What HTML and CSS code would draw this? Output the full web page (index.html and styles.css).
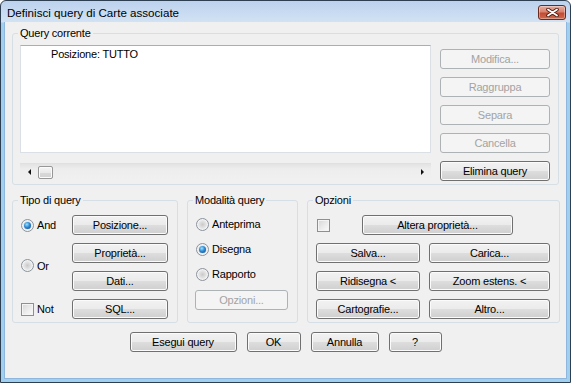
FILE: index.html
```html
<!DOCTYPE html>
<html lang="it">
<head>
    <meta charset="UTF-8">
    <title>Definisci query di Carte associate</title>
    <link rel="stylesheet" href="styles.css">
</head>
<body>

<div class="window">
    <div class="titlebar">
        <span class="title">Definisci query di Carte associate</span>
        <button class="close-btn" title="Chiudi">
            <svg width="13" height="9" viewBox="0 0 13 9">
                <path d="M2 1.5 L11 7.5 M11 1.5 L2 7.5" stroke="#4a1d14" stroke-width="3.6" stroke-linecap="round"/>
                <path d="M2 1.5 L11 7.5 M11 1.5 L2 7.5" stroke="#ffffff" stroke-width="1.8" stroke-linecap="round"/>
            </svg>
        </button>
    </div>

    <div class="client">
        <fieldset class="group group-current">
            <legend>Query corrente</legend>
            <div class="current-body">
                <div class="list-col">
                    <div class="listbox">Posizione: TUTTO</div>
                    <div class="hscroll">
                        <span class="scroll-arrow"><span class="tri tri-left"></span></span>
                        <span class="thumb"></span>
                        <span class="track"></span>
                        <span class="scroll-arrow"><span class="tri tri-right"></span></span>
                    </div>
                </div>
                <div class="side-buttons">
                    <button class="btn" disabled>Modifica...</button>
                    <button class="btn" disabled>Raggruppa</button>
                    <button class="btn" disabled>Separa</button>
                    <button class="btn" disabled>Cancella</button>
                    <button class="btn">Elimina query</button>
                </div>
            </div>
        </fieldset>

        <div class="lower">
            <fieldset class="group group-type">
                <legend>Tipo di query</legend>
                <div class="type-grid">
                    <label class="radio row-1"><span class="radio-mark checked"></span>And</label>
                    <button class="btn">Posizione...</button>
                    <label class="radio row-or"><span class="radio-mark"></span>Or</label>
                    <button class="btn">Proprietà...</button>
                    <button class="btn">Dati...</button>
                    <label class="check row-4"><span class="check-mark"></span>Not</label>
                    <button class="btn">SQL...</button>
                </div>
            </fieldset>

            <fieldset class="group group-mode">
                <legend>Modalità query</legend>
                <label class="radio mode-row"><span class="radio-mark"></span>Anteprima</label>
                <label class="radio mode-row"><span class="radio-mark checked"></span>Disegna</label>
                <label class="radio mode-row"><span class="radio-mark"></span>Rapporto</label>
                <button class="btn btn-options" disabled>Opzioni...</button>
            </fieldset>

            <fieldset class="group group-options">
                <legend>Opzioni</legend>
                <div class="options-grid">
                    <div class="options-top">
                        <span class="check-mark"></span>
                        <button class="btn btn-alter">Altera proprietà...</button>
                    </div>
                    <button class="btn">Salva...</button>
                    <button class="btn">Carica...</button>
                    <button class="btn">Ridisegna &lt;</button>
                    <button class="btn">Zoom estens. &lt;</button>
                    <button class="btn">Cartografie...</button>
                    <button class="btn">Altro...</button>
                </div>
            </fieldset>
        </div>

        <div class="footer">
            <button class="btn btn-run">Esegui query</button>
            <button class="btn btn-ok">OK</button>
            <button class="btn btn-cancel">Annulla</button>
            <button class="btn btn-help">?</button>
        </div>
    </div>
</div>

</body>
</html>
```

FILE: styles.css
```css
* {
    box-sizing: border-box;
    margin: 0;
    padding: 0;
}

body {
    width: 571px;
    height: 383px;
    overflow: hidden;
    background: #ffffff;
    font-family: 'Liberation Sans', Arial, sans-serif;
    font-size: 11px;
    letter-spacing: -0.2px;
    color: #000;
}

.window {
    width: 571px;
    height: 383px;
    border: 1px solid #2f3f52;
    border-radius: 6px 6px 0 0;
    background: linear-gradient(180deg, #bcd2ed 0px, #d2e2f4 21px, #9fd0f0 22px, #9fd0f0 100%);
    display: flex;
    flex-direction: column;
}

/* title bar */

.titlebar {
    height: 21px;
    display: flex;
    justify-content: space-between;
    align-items: flex-start;
    padding-left: 6px;
    padding-right: 4px;
}

.title {
    font-size: 11.6px;
    letter-spacing: 0;
    line-height: 12px;
    margin-top: 6px;
}

.close-btn {
    width: 28px;
    height: 15px;
    margin-top: 4px;
    border: 1px solid #6a2a1e;
    border-radius: 3px;
    background: linear-gradient(180deg, #e6ab9c 0%, #d88572 45%, #c24a33 55%, #cf6a4c 100%);
    box-shadow: inset 0 0 0 1px rgba(255, 255, 255, 0.35);
    display: flex;
    align-items: center;
    justify-content: center;
}

/* client area */

.client {
    flex: 1;
    margin: 0 3px 3px 3px;
    background: #f0f0f0;
    border: 1px solid #8fb6dc;
    border-top: none;
    padding: 5px 7px 0 7px;
    display: flex;
    flex-direction: column;
}

.group {
    border: 1px solid #d5dfe5;
    border-radius: 3px;
    min-width: 0;
}

.group legend {
    padding: 0 2px;
    margin-left: -3px;
    font-size: 11px;
    line-height: 13px;
}

.group-current {
    padding: 5px 9px 3px 7px;
}

.group-current legend {
    margin-left: -2px;
}

.current-body {
    display: grid;
    grid-template-columns: 411px 110px;
    column-gap: 9px;
}

.list-col {
    display: flex;
    flex-direction: column;
}

.listbox {
    height: 108px;
    background: #fff;
    border: 1px solid #dbdfe6;
    border-top-color: #abadb3;
    padding: 2px 0 0 30px;
    line-height: 13px;
}

.hscroll {
    margin-top: 10px;
    height: 17px;
    display: flex;
    align-items: center;
    background: linear-gradient(180deg, #e3e3e3 0%, #ededed 30%, #f0f0f0 100%);
    border-top: 1px solid #e0e0e0;
}

.scroll-arrow {
    width: 18px;
    height: 16px;
    display: flex;
    align-items: center;
    justify-content: center;
}

.tri {
    width: 0;
    height: 0;
    border-top: 3px solid transparent;
    border-bottom: 3px solid transparent;
}

.tri-left {
    border-right: 3px solid #111;
}

.tri-right {
    border-left: 3px solid #111;
}

.thumb {
    width: 15px;
    height: 13px;
    border: 1px solid #979797;
    border-radius: 2px;
    background: linear-gradient(180deg, #f6f6f6 0%, #e9e9e9 50%, #d9d9d9 51%, #d2d2d2 100%);
    box-shadow: inset 0 0 0 1px #fbfbfb;
}

.track {
    flex: 1;
}

.side-buttons {
    display: flex;
    flex-direction: column;
    gap: 8px;
    padding-top: 4px;
}

/* buttons */

.btn {
    height: 20px;
    font-family: 'Liberation Sans', Arial, sans-serif;
    font-size: 11px;
    letter-spacing: -0.2px;
    line-height: 16px;
    color: #000;
    border: 1px solid #707070;
    border-radius: 3px;
    background: linear-gradient(180deg, #f2f2f2 0%, #ebebeb 48%, #dddddd 52%, #cfcfcf 100%);
    box-shadow: inset 0 0 0 1px #fbfbfb;
}

.btn:disabled {
    color: #a3a3a3;
    border-color: #adb2b5;
    background: #f4f4f4;
    box-shadow: none;
}

/* lower groups */

.lower {
    margin-top: 9px;
    display: grid;
    grid-template-columns: 166px 111px 253px;
    column-gap: 9px;
}

.group-type {
    padding: 8px 9px 3px 8px;
}

.type-grid {
    display: grid;
    grid-template-columns: 51px 96px;
    grid-template-rows: repeat(4, 20px);
    row-gap: 8px;
}

.type-grid .btn {
    grid-column: 2;
}

.row-1 {
    grid-row: 1;
}

.row-or {
    grid-row: 2 / 4;
    margin-top: -3px;
}

.row-4 {
    grid-row: 4;
}

.radio, .check {
    grid-column: 1;
    display: flex;
    align-items: center;
    gap: 3px;
}

.radio-mark {
    width: 13px;
    height: 13px;
    border-radius: 50%;
    border: 1px solid #8a939c;
    background: radial-gradient(circle at 50% 50%, #c9c9c9 0%, #e4e4e4 45%, #f7f7f7 100%);
    box-shadow: inset 0 0 0 1px #f4f4f4;
    display: flex;
    align-items: center;
    justify-content: center;
}

.radio-mark.checked::after {
    content: "";
    width: 7px;
    height: 7px;
    border-radius: 50%;
    background: radial-gradient(circle at 40% 35%, #9be2ff 0%, #2c8ad6 45%, #0e3f80 100%);
}

.check-mark {
    width: 13px;
    height: 13px;
    border: 1px solid #8f8f8f;
    background: linear-gradient(135deg, #d6d6d6 0%, #eeeeee 60%, #fbfbfb 100%);
    box-shadow: inset 0 0 0 1px #f4f4f4;
}

.group-mode {
    padding: 8px 9px 3px 7px;
    display: flex;
    flex-direction: column;
    align-items: flex-start;
    gap: 7px;
}

.group-mode legend {
    margin-left: -2px;
}

.mode-row {
    height: 18px;
    margin-left: 1px;
}

.btn-options {
    width: 93px;
}

.group-options {
    padding: 8px 9px 3px 8px;
}

.options-grid {
    display: grid;
    grid-template-columns: 104px 121px;
    grid-auto-rows: 20px;
    column-gap: 9px;
    row-gap: 8px;
}

.options-top {
    grid-column: 1 / -1;
    display: flex;
    align-items: center;
}

.options-top .check-mark {
    margin-left: 1px;
}

.btn-alter {
    width: 151px;
    margin-left: 32px;
}

/* footer */

.footer {
    margin-top: 9px;
    display: flex;
    justify-content: center;
    gap: 10px;
}

.btn-run {
    width: 107px;
}

.btn-ok {
    width: 54px;
}

.btn-cancel {
    width: 68px;
}

.btn-help {
    width: 53px;
}
```
